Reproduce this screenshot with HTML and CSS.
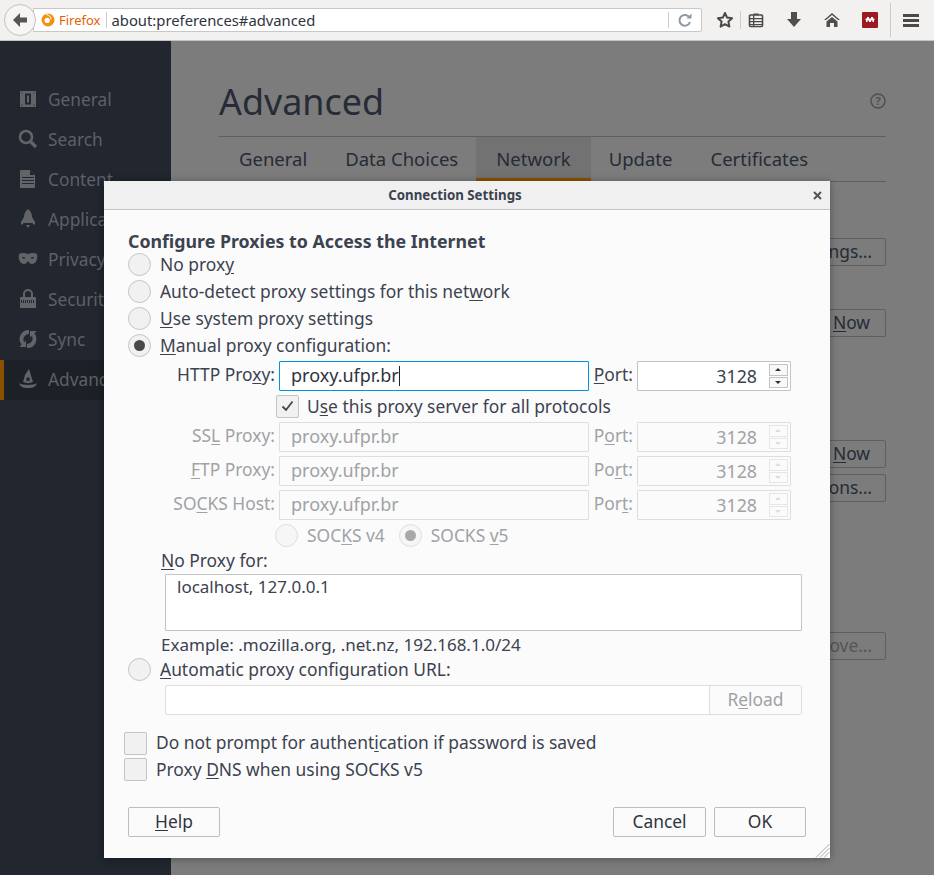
FILE: index.html
```html
<!DOCTYPE html>
<html lang="en">
<head>
  <meta charset="UTF-8"/>
  <title>Connection Settings</title>
  <link rel="stylesheet" href="styles.css">
</head>
<body>

  <header class="toolbar">
    <div class="back">
      <svg width="18" height="18" viewBox="0 0 18 18"><path d="M9 2 2 9l7 7v-4.500h7v-5H9z" fill="#555"/></svg>
    </div>
    <div class="urlbar">
      <span class="identity">
        <svg width="14" height="14" viewBox="0 0 14 14"><circle cx="7" cy="7" r="6.5" fill="#f29111"/><circle cx="6.200" cy="7.400" r="2.600" fill="#fff"/><path d="M5 1.500c3 .2 5 2 5 5" stroke="#fff" stroke-width="1" fill="none"/></svg>
        <span>Firefox</span>
      </span>
      <span class="url">about:preferences#advanced</span>
      <span class="reload">
        <svg width="16" height="16" viewBox="0 0 16 16"><path d="M12.500 5.500A5.400 5.400 0 1 0 13 10" fill="none" stroke="#8c9aa8" stroke-width="2"/><path d="M9.500 6.500h5v-5z" fill="#8c9aa8"/></svg>
      </span>
    </div>
    <div class="tools">
      <svg class="tool t-star" width="18" height="18" viewBox="0 0 18 18"><path d="M9 2l2.100 4.600 5 .6-3.700 3.400 1 5L9 13.200l-4.400 2.400 1-5L1.900 7.200l5-.6z" fill="none" stroke="#4a4a4a" stroke-width="2" stroke-linejoin="round"/></svg>
      <span class="tool-sep"></span>
      <svg class="tool t-list" width="16" height="16" viewBox="0 0 16 16"><path d="M2.500 3h11a1 1 0 0 1 1 1v9.500a1 1 0 0 1-1 1h-11a1 1 0 0 1-1-1V4a1 1 0 0 1 1-1z" fill="none" stroke="#4a4a4a" stroke-width="1.600"/><path d="M5.500 1.500h5V3h-5zM2 6h12v1.300H2zM2 9h12v1.300H2zM2 12h12v1H2zM5 3h1.300v11H5z" fill="#4a4a4a"/></svg>
      <svg class="tool t-down" width="16" height="18" viewBox="0 0 16 18"><path d="M5 1h6v7h4l-7 8-7-8h4z" fill="#4f4f4f"/></svg>
      <svg class="tool t-home" width="18" height="16" viewBox="0 0 18 16"><path d="M9 1 1 8h2l6-5 6 5h2z" fill="#4f4f4f"/><path d="M9 5 3.500 9.500V15H7v-4h4v4h3.500V9.500z" fill="#4f4f4f"/></svg>
      <svg class="tool t-mega" width="16" height="16" viewBox="0 0 16 16"><rect width="16" height="16" rx="1" fill="#9c1a22"/><path d="M5 5h2v1.500h2V5h2v1.500h1.500V8H12v2h-1.500V8.500H9V10H7V8.500H5.500V10H4V8H3.500V6.500H5z" fill="#fff"/></svg>
      <span class="tool-sep tool-sep-tall"></span>
      <div class="burger"><i></i><i></i><i></i></div>
    </div>
  </header>

  <div class="prefs">
    <nav class="side">
      <a class="cat">
        <svg width="18" height="18" viewBox="0 0 18 18"><path d="M1.500 1h15a.5.5 0 0 1 .5.5v15a.5.5 0 0 1-.5.5h-15a.5.5 0 0 1-.5-.5v-15a.5.5 0 0 1 .5-.5zM6 3.500v11h6v-11zM8 5.500h2v7H8z" fill="#626468" fill-rule="evenodd"/><path d="M2.500 14.500h1v1h-1zM14.500 14.500h1v1h-1zM2.500 2.500h1v1h-1zM14.500 2.500h1v1h-1z" fill="#21262f"/></svg>
        <span>General</span>
      </a>
      <a class="cat">
        <svg width="20" height="20" viewBox="0 0 20 20"><circle cx="8" cy="8" r="6" fill="none" stroke="#626468" stroke-width="2.600"/><path d="M12 12l6 6" stroke="#626468" stroke-width="3.400"/></svg>
        <span>Search</span>
      </a>
      <a class="cat">
        <svg width="18" height="20" viewBox="0 0 18 20"><path d="M2 1h9l5 5v12a1 1 0 0 1-1 1H2a1 1 0 0 1-1-1V2a1 1 0 0 1 1-1z" fill="#626468"/><path d="M3 8h12v1H3zM3 11h12v1H3zM3 14h12v1H3zM11 1v5h5" fill="#21262f"/></svg>
        <span>Content</span>
      </a>
      <a class="cat">
        <svg width="18" height="20" viewBox="0 0 18 20"><path d="M9 0c3 2 4 5 4 8l3 5v3l-3-2H5l-3 2v-3l3-5c0-3 1-6 4-8zM7 16h4l-2 3z" fill="#626468"/></svg>
        <span>Applications</span>
      </a>
      <a class="cat">
        <svg width="20" height="14" viewBox="0 0 20 14"><path d="M1 2c3-1.500 6-1 9 0 3-1 6-1.500 9 0 1 5-1 10-5 10-2 0-3-2-4-3-1 1-2 3-4 3C2 12 0 7 1 2zM4 5.500c1 1.500 2.500 1.500 3.500.5-1-1-2.500-1.200-3.500-.5zm12 0c-1 1.500-2.500 1.500-3.500.5 1-1 2.500-1.200 3.500-.5z" fill="#626468" fill-rule="evenodd"/></svg>
        <span>Privacy</span>
      </a>
      <a class="cat">
        <svg width="18" height="20" viewBox="0 0 18 20"><path d="M5 9V5a4 4 0 0 1 8 0v4" fill="none" stroke="#626468" stroke-width="2"/><rect x="1" y="8" width="16" height="11" rx="1" fill="#626468"/><path d="M2 12.500h14" stroke="#21262f" stroke-width="3" stroke-dasharray="1 1"/></svg>
        <span>Security</span>
      </a>
      <a class="cat">
        <svg width="20" height="20" viewBox="0 0 20 20"><path d="M11 1A9 9 0 0 0 3.500 15.500L1.500 18H8v-6.500l-1.800 1.800A5.500 5.500 0 0 1 11 5zM9 19a9 9 0 0 0 7.500-14.500l2-2.500H12v6.500l1.800-1.800A5.500 5.500 0 0 1 9 15z" fill="#626468"/></svg>
        <span>Sync</span>
      </a>
      <a class="cat cat-on">
        <svg width="20" height="20" viewBox="0 0 20 20"><path d="M11 0l4 13c-3 1.500-7 1.500-10 0l2-7z" fill="#626468"/><path d="M1 14c2 2.500 16 2.500 18 0-1 4-4 5-9 5s-8-1-9-5z" fill="#626468"/><path d="M10 7.500l.8 1.700 1.800.2-1.300 1.200.3 1.800-1.600-.9-1.600.9.3-1.800-1.300-1.200 1.800-.2z" fill="#1c2027"/></svg>
        <span>Advanced</span>
      </a>
    </nav>

    <main class="pane">
      <div class="pane-head">
        <h1>Advanced</h1>
        <svg width="16" height="16" viewBox="0 0 16 16"><circle cx="8" cy="8" r="7" fill="none" stroke="#505050" stroke-width="1.500"/><text x="8" y="12" text-anchor="middle" font-size="11" font-weight="700" font-family="Open Sans" fill="#505050">?</text></svg>
      </div>
      <div class="tabs">
        <span class="tab">General</span>
        <span class="tab">Data Choices</span>
        <span class="tab tab-on">Network</span>
        <span class="tab">Update</span>
        <span class="tab">Certificates</span>
      </div>
      <div class="back-btn b1">Settings…</div>
      <div class="back-btn b2">Clear <u>N</u>ow</div>
      <div class="back-btn b3">Clear <u>N</u>ow</div>
      <div class="back-btn b4">Exceptions…</div>
      <div class="back-btn b5">Remove…</div>
    </main>
  </div>

  <section class="dialog">
    <div class="dialog-title">
      <b>Connection Settings</b>
      <svg class="dialog-x" width="9" height="9" viewBox="0 0 9 9"><path d="M1 1l7 7M8 1 1 8" stroke="#555" stroke-width="2"/></svg>
    </div>

    <div class="dialog-body">
      <h2>Configure Proxies to Access the Internet</h2>
      <label class="choice"><span class="radio"></span><span class="txt">No prox<u>y</u></span></label>
      <label class="choice"><span class="radio"></span><span class="txt">Auto-detect proxy settings for this net<u>w</u>ork</span></label>
      <label class="choice"><span class="radio"></span><span class="txt"><u>U</u>se system proxy settings</span></label>
      <label class="choice"><span class="radio radio-on"></span><span class="txt"><u>M</u>anual proxy configuration:</span></label>

      <div class="proxy-grid">
        <span class="lbl">HTTP Pro<u>x</u>y:</span>
        <div class="field field-focus">proxy.ufpr.br<i class="caret"></i></div>
        <span class="lbl"><u>P</u>ort:</span>
        <div class="port"><span>3128</span><div class="spin"><i class="up"></i><i class="dn"></i></div></div>

        <label class="all-proto"><span class="check"><svg width="13" height="12" viewBox="0 0 13 12"><path d="M1.500 6.500 5 10l6.500-8.500" fill="none" stroke="#444" stroke-width="1.800"/></svg></span><span>U<u>s</u>e this proxy server for all protocols</span></label>

        <span class="lbl off">SS<u>L</u> Proxy:</span>
        <div class="field off">proxy.ufpr.br</div>
        <span class="lbl off">P<u>o</u>rt:</span>
        <div class="port off"><span>3128</span><div class="spin"><i class="up"></i><i class="dn"></i></div></div>

        <span class="lbl off"><u>F</u>TP Proxy:</span>
        <div class="field off">proxy.ufpr.br</div>
        <span class="lbl off">Po<u>r</u>t:</span>
        <div class="port off"><span>3128</span><div class="spin"><i class="up"></i><i class="dn"></i></div></div>

        <span class="lbl off">SO<u>C</u>KS Host:</span>
        <div class="field off">proxy.ufpr.br</div>
        <span class="lbl off">Por<u>t</u>:</span>
        <div class="port off"><span>3128</span><div class="spin"><i class="up"></i><i class="dn"></i></div></div>
      </div>

      <div class="socks">
        <label class="socks-opt off"><span class="radio"></span><span class="txt">SOC<u>K</u>S v4</span></label>
        <label class="socks-opt off"><span class="radio radio-on"></span><span class="txt">SOCKS <u>v</u>5</span></label>
      </div>

      <div class="noproxy">
        <div class="noproxy-lbl"><u>N</u>o Proxy for:</div>
        <div class="textarea">localhost, 127.0.0.1</div>
        <div class="example">Example: .mozilla.org, .net.nz, 192.168.1.0/24</div>
      </div>

      <label class="choice"><span class="radio"></span><span class="txt"><u>A</u>utomatic proxy configuration URL:</span></label>
      <div class="auto-url">
        <div class="auto-input"></div>
        <div class="auto-reload">R<u>e</u>load</div>
      </div>

      <label class="opt opt-first"><span class="check check-off"></span><span class="txt">Do not prompt for authent<u>i</u>cation if password is saved</span></label>
      <label class="opt"><span class="check check-off"></span><span>Proxy <u>D</u>NS when using SOCKS v5</span></label>

      <div class="actions">
        <button class="btn btn-help"><u>H</u>elp</button>
        <span class="spacer"></span>
        <button class="btn btn-cancel">Cancel</button>
        <button class="btn btn-ok">OK</button>
      </div>
    </div>
    <svg class="grip" width="15" height="15" viewBox="0 0 15 15"><path d="M14.500 1 1 14.500M14.500 5 5 14.500M14.500 9 9 14.500" stroke="#aaa" stroke-width="1"/></svg>
  </section>

</body>
</html>
```

FILE: styles.css
```css
* { box-sizing: border-box; }

html, body {
  margin: 0;
  height: 875px;
  overflow: hidden;
}

body {
  font-family: "Noto Sans", sans-serif;
  font-size: 17.4px;
  color: #3b4250;
  background: #7c7c7c;
  position: relative;
}

u { text-underline-offset: 2px; }

/* === browser toolbar === */
.toolbar {
  display: flex;
  align-items: center;
  height: 41px;
  background: #f2f1ef;
  border-bottom: 1px solid #c4c4c2;
  padding-left: 4px;
}

.back {
  width: 32px;
  height: 32px;
  border: 1px solid #c2c2c0;
  border-radius: 50%;
  background: #f6f5f3;
  display: flex;
  align-items: center;
  justify-content: center;
  position: relative;
  z-index: 1;
}

.urlbar {
  width: 669px;
  height: 24px;
  margin-left: -3px;
  background: #fff;
  border: 1px solid #c8c8c8;
  border-radius: 0 2px 2px 0;
  display: flex;
  align-items: center;
  padding-left: 7px;
}

.identity {
  display: flex;
  align-items: center;
  gap: 4px;
  font-size: 13px;
  color: #e66000;
  padding-right: 5px;
  border-right: 1px solid #ccc;
  height: 16px;
}

.url {
  font-size: 14.800px;
  color: #2e3440;
  margin-left: 5px;
}

.reload {
  margin-left: auto;
  width: 33px;
  height: 16px;
  border-left: 1px solid #ccc;
  display: flex;
  justify-content: center;
}

.tools {
  display: flex;
  align-items: center;
  height: 32px;
}

.tool { display: block; }
.t-star { margin-left: 14px; }
.tool-sep { width: 1px; height: 18px; background: #ccc; margin: 0 7px 0 6px; }
.tool-sep-tall { height: 34px; margin: 0 12px 0 12px; }
.t-down { margin-left: 22px; }
.t-home { margin-left: 21px; }
.t-mega { margin-left: 21px; }

.burger { width: 16px; }
.burger i {
  display: block;
  height: 3px;
  background: #4a4a4a;
  margin: 2px 0;
}

/* === dimmed preferences page === */
.prefs {
  display: flex;
  height: 834px;
}

.side {
  width: 171px;
  background: #21262f;
  padding-top: 39px;
  flex: none;
}

.cat {
  display: flex;
  align-items: center;
  height: 40px;
  padding-left: 18px;
  padding-bottom: 2px;
  color: #5e6065;
  font-size: 17.300px;
  white-space: nowrap;
  overflow: hidden;
}

.cat svg { width: 20px; margin-right: 10px; flex: none; }

.cat-on {
  background: #1c2027;
  border-left: 4px solid #8a5000;
  padding-left: 14px;
}

.pane {
  flex: 1;
  padding: 0 48px;
  position: relative;
}

.pane-head {
  display: flex;
  align-items: center;
  justify-content: space-between;
  height: 96px;
  padding-top: 25px;
  border-bottom: 1px solid #5e5e5e;
}

.pane-head h1 {
  margin: 0;
  font-size: 35.900px;
  font-weight: 400;
  color: #262b36;
}

.pane-head svg { margin-bottom: 1px; }

.tabs {
  display: flex;
  height: 45px;
  border-bottom: 1px solid #5e5e5e;
  color: #262b36;
  font-size: 18.500px;
}

.tab {
  padding: 10px 20px 0;
  line-height: 24px;
  margin-right: -2px;
}

.tab-on {
  background: #727272;
  border-bottom: 4px solid #8a5000;
  height: 45px;
}

.back-btn {
  position: absolute;
  right: 48px;
  height: 28px;
  padding: 0 13px;
  border: 1px solid #5f5f5f;
  border-radius: 2px;
  color: #262b36;
  line-height: 25px;
  white-space: nowrap;
}

.b1 { top: 197px; }
.b2 { top: 268px; padding: 0 15px; }
.b3 { top: 399px; padding: 0 15px; }
.b4 { top: 433px; }
.b5 { top: 591px; color: #555; }

/* === dialog === */
.dialog {
  position: absolute;
  left: 104px;
  top: 181px;
  width: 726px;
  height: 677px;
  background: #fbfbfb;
  box-shadow: 0 1px 8px rgba(0,0,0,0.35);
}

.dialog-title {
  height: 29px;
  background: #f0f0f0;
  border-bottom: 1px solid #c4c4c4;
  text-align: center;
  font-size: 13.300px;
  line-height: 28px;
  padding-right: 24px;
  position: relative;
}

.dialog-x {
  position: absolute;
  right: 8px;
  top: 10px;
}

.dialog-body {
  padding: 21px 24px 0 20px;
}

h2 {
  margin: 0 0 0 4px;
  font-size: 17.800px;
  line-height: 20px;
  font-weight: 700;
}

.choice {
  display: flex;
  align-items: center;
  height: 27px;
  margin-left: 4px;
  white-space: nowrap;
}

.txt { margin-bottom: 2px; }

.radio {
  width: 23px;
  height: 23px;
  border: 1px solid #c4c4c4;
  border-radius: 50%;
  background: #f1f1f1;
  margin-right: 9px;
  flex: none;
  position: relative;
}

.radio-on::after {
  content: "";
  position: absolute;
  left: 5px;
  top: 5px;
  width: 11px;
  height: 11px;
  border-radius: 50%;
  background: #484848;
}

.proxy-grid {
  display: grid;
  grid-template-columns: 151px 310px 40px 154px;
  grid-template-rows: 30px 23px 30px 30px 30px;
  column-gap: 4px;
  row-gap: 4px;
  margin-top: 2px;
  align-items: center;
}

.lbl {
  text-align: right;
  white-space: nowrap;
  line-height: 26px;
  height: 28px;
  align-self: start;
}

.field {
  height: 30px;
  border: 1px solid #c8c8c8;
  background: #fff;
  border-radius: 1px;
  padding-left: 11px;
  font-size: 18px;
  line-height: 26px;
}

.field-focus { border-color: #0095dd; color: #2e3440; line-height: 27px; }

.caret {
  display: inline-block;
  width: 1px;
  height: 20px;
  background: #222;
  vertical-align: -4px;
}

.port {
  height: 30px;
  border: 1px solid #c4c4c4;
  background: #fff;
  border-radius: 1px;
  display: flex;
  align-items: center;
  justify-content: flex-end;
  padding-right: 2px;
  font-size: 17.800px;
}

.port span { margin-right: 12px; }

.spin {
  width: 19px;
  height: 24px;
  display: flex;
  flex-direction: column;
  gap: 1px;
}

.spin i {
  flex: 1;
  border: 1px solid #c4c4c4;
  position: relative;
  background: #f8f8f8;
}

.spin i::after {
  content: "";
  position: absolute;
  left: 5px;
  border-left: 3px solid transparent;
  border-right: 3px solid transparent;
}

.spin .up::after { top: 3px; border-bottom: 3px solid #333; }
.spin .dn::after { top: 3px; border-top: 3px solid #333; }

.all-proto {
  grid-column: 1 / -1;
  display: flex;
  align-items: center;
  height: 23px;
  padding-left: 152px;
  margin-top: -1px;
}

.check {
  width: 23px;
  height: 23px;
  border: 1px solid #c4c4c4;
  border-radius: 2px;
  background: #f1f1f1;
  margin-right: 8px;
  flex: none;
  display: flex;
  align-items: center;
  justify-content: center;
}

.off { color: #a0a2a6; }
.field.off, .port.off { background: #fbfbfb; border-color: #dedede; }
.port.off .spin i { border-color: #e6e6e6; background: #fbfbfb; }
.port.off .spin .up::after { border-bottom-color: #ddd; }
.port.off .spin .dn::after { border-top-color: #ddd; }

.socks {
  display: flex;
  height: 27px;
  margin: 2px 0 0 151px;
  align-items: center;
}

.socks-opt {
  display: flex;
  align-items: center;
  margin-right: 14px;
}

.socks-opt .radio {
  background: #f6f6f6;
  border-color: #dedede;
}

.socks-opt .radio-on::after { background: #a8a8a8; }

.noproxy {
  margin-left: 37px;
  font-size: 17px;
}

.noproxy-lbl {
  line-height: 23px;
  height: 25px;
  font-size: 17.400px;
}

.textarea {
  height: 57px;
  width: 637px;
  margin-left: 4px;
  border: 1px solid #c4c4c4;
  background: #fff;
  padding: 0 11px;
  border-radius: 1px;
}

.example {
  line-height: 22px;
  margin-top: 3px;
}

.auto-url {
  display: flex;
  height: 30px;
  margin: 2px 0 0 41px;
  width: 637px;
  border: 1px solid #dedede;
  border-radius: 2px;
  background: #fff;
}

.auto-input { flex: 1; }

.auto-reload {
  width: 92px;
  background: #fbfbfb;
  border-left: 1px solid #dedede;
  text-align: center;
  color: #a0a2a6;
  line-height: 27px;
}

.opt {
  display: flex;
  align-items: center;
  height: 26px;
  white-space: nowrap;
}

.opt-first { margin-top: 15px; }
.check-off { margin-right: 9px; }

.actions {
  display: flex;
  gap: 8px;
  margin-top: 25px;
  padding-left: 4px;
}

.spacer { flex: 1; }

.btn {
  height: 30px;
  border: 1px solid #bdbdbd;
  border-radius: 2px;
  background: #fbfbfb;
  font: inherit;
  color: #2e3440;
  padding: 0 0 2px;
}

.btn-help { width: 92px; }
.btn-cancel { width: 93px; }
.btn-ok { width: 92px; }

.grip {
  position: absolute;
  right: 0;
  bottom: 0;
}
```
